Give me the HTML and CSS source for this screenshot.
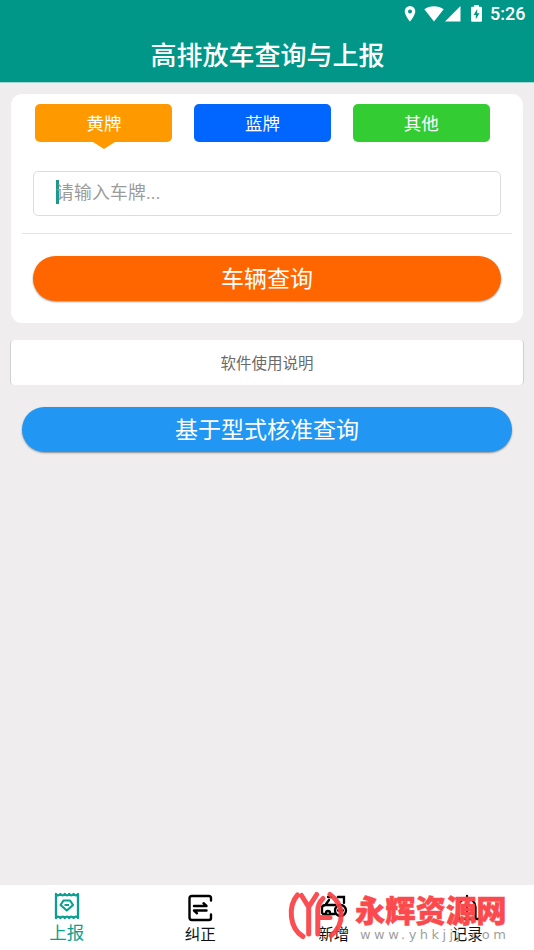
FILE: index.html
```html
<!DOCTYPE html>
<html lang="zh-CN">
<head>
<meta charset="utf-8">
<title>高排放车查询与上报</title>
<link rel="stylesheet" href="styles.css">
</head>
<body>
<div class="app">
  <header class="header">
    <div class="status">
      <svg class="pin" width="12" height="16" viewBox="0 0 12 16"><path fill="#fff" fill-rule="evenodd" d="M6 0a5.300 5.300 0 0 0-5.300 5.300C.7 9.300 6 15.700 6 15.700s5.300-6.400 5.300-10.400A5.300 5.300 0 0 0 6 0zm0 3.400a2 2 0 1 1 0 4 2 2 0 0 1 0-4z"/></svg>
      <svg class="wifi" width="20" height="16" viewBox="0 0 20 16"><path fill="#fff" d="M10 15.500.3 3.300C5.500-.8 14.500-.8 19.700 3.300z"/></svg>
      <svg class="signal" width="16" height="16" viewBox="0 0 16 16"><path fill="#fff" d="M15.500 0v15.600H0z"/></svg>
      <svg class="battery" width="11" height="17" viewBox="0 0 11 17"><path fill="#fff" fill-rule="evenodd" d="M3.200 0h4.600v1.700h2q1.200 0 1.200 1.200v12.600q0 1.200-1.200 1.200H1.200Q0 16.700 0 15.500V2.900q0-1.200 1.200-1.200h2zM6.200 4 2.600 9.900h2.200v4.300l3.700-6H6.200z"/></svg>
      <span class="clock">5:26</span>
    </div>
    <h1 class="title">高排放车查询与上报</h1>
  </header>

  <main class="content">
    <section class="card">
      <div class="plates">
        <div class="plate plate-yellow active">黄牌</div>
        <div class="plate plate-blue">蓝牌</div>
        <div class="plate plate-green">其他</div>
      </div>
      <div class="field"><span class="caret"></span><span class="hint">请输入车牌...</span></div>
      <div class="divider"></div>
      <div class="pill pill-orange">车辆查询</div>
    </section>
    <div class="manual">软件使用说明</div>
    <div class="pill pill-blue">基于型式核准查询</div>
  </main>

  <nav class="tabs">
    <div class="tab selected">
      <svg width="26" height="28" viewBox="0 0 26 28" fill="none" stroke="#0aa08f" stroke-width="2.300" stroke-linejoin="round"><path d="M2 2q2 2.600 4.400 0 2.200 2.600 4.400 0 2.200 2.600 4.400 0 2.200 2.600 4.400 0 2.400 2.600 4.400 0v24q-2-2.600-4.400 0-2.200-2.600-4.400 0-2.200-2.600-4.400 0-2.200-2.600-4.400 0Q4 23.400 2 26z"/><path d="M9.500 8.500h6.500l3 4.500-6.200 5.500L6.600 13zM10.500 13h4.500" stroke-width="2.200"/></svg>
      <span>上报</span>
    </div>
    <div class="tab">
      <svg width="26" height="28" viewBox="0 0 26 28" fill="none" stroke="#000" stroke-width="2.400" stroke-linecap="round" stroke-linejoin="round"><path d="M24 6.500V4q0-2-2-2H5Q2.500 2 2.500 4.500v19Q2.500 26 5 26h17q2 0 2-2v-3.500"/><path d="M7 12h12.500l-3-2.800M19.500 16.500H7l3 2.800"/></svg>
      <span>纠正</span>
    </div>
    <div class="tab">
      <svg width="28" height="28" viewBox="0 0 28 28" fill="none" stroke="#000" stroke-width="2.300" stroke-linecap="round"><path d="M8 3h3M18 3h6v6M6 10l3-4M2 19v-5q0-3 4-3h9M3 20h3m5 0h4"/><circle cx="8" cy="19" r="2"/><circle cx="20.500" cy="16.500" r="5.500"/><path d="M18 16.500h5m-2.500-2.500v5"/></svg>
      <span>新增</span>
    </div>
    <div class="tab">
      <svg width="26" height="28" viewBox="0 0 26 28" fill="none" stroke="#000" stroke-width="2.300" stroke-linecap="round"><path d="M13 2v2M4.500 24V13a8.500 8.500 0 0 1 17 0v11M2 25h22M13 13v5"/></svg>
      <span>记录</span>
    </div>
  </nav>

  <div class="watermark">
    <svg class="wm-logo" width="58" height="52" viewBox="0 0 58 52" fill="none" stroke="#fb3f43" stroke-opacity=".92" stroke-width="5" stroke-linecap="round" stroke-linejoin="round"><path d="M10.500 6C1 17 2 39 16 47.500M14.500 6.500l7.200 11.500L29.700 5.500M21.700 18v27M36 9.500q-5.200 5-5.200 12v23.500M31 28.500H43M43 5.500c14.500 10 15 30 1 41"/></svg>
    <div class="wm-text">
      <div class="wm-name">永辉资源网</div>
      <div class="wm-url">www.yhkjjj.com</div>
    </div>
  </div>
</div>
</body>
</html>
```
FILE: styles.css
```css
* { box-sizing: border-box; }
body {
  margin: 0;
  font-family: Roboto, "Noto Sans CJK SC", sans-serif;
  background: #efedee;
}
.app {
  position: relative;
  display: flex;
  flex-direction: column;
  height: 950px;
  overflow: hidden;
}
.header {
  height: 82px;
  flex: none;
  background: #009688;
  color: #fff;
  box-shadow: 0 1px 0 #a5d6d0;
}
.status {
  display: flex;
  align-items: center;
  justify-content: flex-end;
  height: 27px;
  padding-right: 9px;
}
.wifi { margin-left: 8px; }
.signal { margin-left: 1px; }
.battery { margin: 0 8px 0 10px; }
.clock { font-size: 18px; font-weight: 500; line-height: 27px; width: 35px; white-space: nowrap; }
.title {
  margin: 0;
  padding-left: 1px;
  font-size: 26px;
  line-height: 58px;
  font-weight: 500;
  text-align: center;
}
.content {
  flex: 1;
  padding: 12px 10px 0;
}
.card {
  height: 229px;
  margin: 0 1px;
  padding: 10px 11px 0;
  border-radius: 11px;
  background: #fff;
}
.plates {
  display: grid;
  grid-template-columns: repeat(3, 137px);
  gap: 21.700px;
  padding-left: 13.400px;
}
.plate {
  position: relative;
  height: 37.500px;
  border-radius: 5px;
  color: #fff;
  font-size: 17.500px;
  line-height: 41px;
  text-align: center;
}
.plate-yellow { background: #ff9900; }
.plate-blue { background: #0066ff; }
.plate-green { background: #33cc33; }
.active::after {
  content: "";
  position: absolute;
  left: 50%;
  top: 100%;
  margin-left: -11px;
  border: solid transparent;
  border-width: 7px 11px 0;
  border-top-color: #ff9900;
}
.field {
  display: flex;
  align-items: center;
  height: 45px;
  margin: 29.500px 11px 0;
  padding: 0 0 4px 22px;
  border: 1px solid #dcdcdc;
  border-radius: 5px;
}
.caret { width: 2.500px; height: 24px; background: #1d998c; }
.hint { margin-left: -2.500px; color: #9b9b9b; font-size: 17.800px; line-height: 26px; letter-spacing: .2px; padding-top: 2px; }
.divider { height: 1px; margin-top: 17px; background: #e3e3e3; }
.pill {
  height: 44.500px;
  border-radius: 23px;
  color: #fff;
  font-size: 23px;
  line-height: 48px;
  text-align: center;
  box-shadow: 0 1px 2px rgba(0, 0, 0, .4);
}
.pill-orange { margin: 22px 11px 0; background: #ff6600; }
.pill-blue { margin: 22px 12px 0; background: #2196f3; }
.manual {
  height: 45px;
  margin-top: 17px;
  border: solid #d0d0d0;
  border-width: 0 1px;
  border-radius: 4px;
  background: #fff;
  color: #6b6b6b;
  font-size: 15.500px;
  line-height: 48px;
  text-align: center;
}
.tabs {
  display: flex;
  flex: none;
  height: 65px;
  background: #fff;
}
.tab {
  display: flex;
  flex: 1;
  flex-direction: column;
  align-items: center;
  padding-top: 9px;
  color: #111;
  font-size: 15.500px;
  line-height: 26px;
}
.tab svg { flex: none; }
.tab.selected { padding-top: 7px; color: #0aa08f; font-size: 17.500px; }
.watermark {
  position: absolute;
  left: 287px;
  top: 889px;
  display: flex;
}
.wm-text { margin-left: 10px; }
.wm-name {
  color: #fb4a4d;
  font-size: 30.300px;
  font-weight: 900;
  line-height: 46px;
  white-space: nowrap;
  -webkit-text-stroke: .5px #fb4a4d;
}
.wm-url {
  margin: -8px 0 0 5px;
  color: #a0a0a0;
  font-family: "DejaVu Sans", sans-serif;
  font-size: 13px;
  line-height: 16px;
  letter-spacing: 3.450px;
  white-space: nowrap;
}
```
